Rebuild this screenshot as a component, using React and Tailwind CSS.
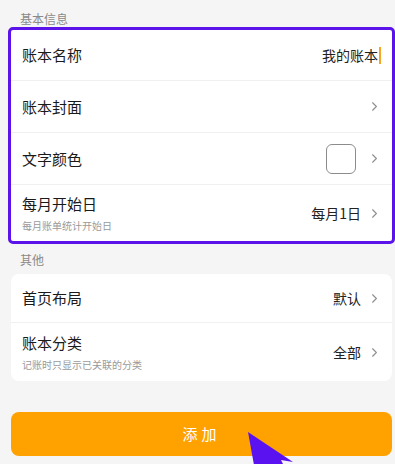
import { ChevronRight } from 'lucide-react'

const FONT = { fontFamily: '"Noto Sans CJK SC", "Noto Sans", sans-serif' }

function Chevron() {
  return <ChevronRight className="w-[15px] h-[15px] text-[#8f8f8f] ml-[6px]" strokeWidth={1.8} />
}

function Row({ title, sub, right, height, divider = true, chevron = true }) {
  return (
    <div className={`flex items-center pl-[11px] pr-[10px] ${height} ${divider ? 'border-b border-[#f0f0f0]' : ''}`}>
      <div className="flex-1 min-w-0 flex flex-col">
        <span className="text-[15px] leading-[20px] text-[#1a1a1a]">{title}</span>
        {sub && <span className="text-[10px] leading-[14px] text-[#9a9a9a] mt-[5px]">{sub}</span>}
      </div>
      {right}
      {chevron && <Chevron />}
    </div>
  )
}

export default function App() {
  return (
    <div className="relative h-[464px] w-[395px] overflow-hidden bg-[#f5f5f5] pl-[11px] pr-[3px]" style={FONT}>
      <div className="pt-[10px] pl-[9px] pb-[3px] text-[12px] leading-[17px] text-[#8a8a8a]">基本信息</div>

      {/* basic info card, highlighted */}
      <div className="bg-white rounded-[2px] outline-[3px] outline-solid outline-[#5b13ea]">
        <Row
          title="账本名称"
          height="h-[51px]"
          chevron={false}
          right={
            <span className="flex items-center text-[14px] text-[#222] mr-[1px]">
              我的账本
              <span className="inline-block w-[2px] h-[17px] bg-[#f5a623] ml-[1px]" />
            </span>
          }
        />
        <Row title="账本封面" height="h-[52px]" />
        <Row
          title="文字颜色"
          height="h-[52px]"
          right={<span className="w-[30px] h-[30px] rounded-[6px] border border-[#8c8c8c] mr-[5px]" />}
        />
        <Row
          title="每月开始日"
          sub="每月账单统计开始日"
          height="h-[56px]"
          divider={false}
          right={<span className="text-[14px] text-[#222]">每月1日</span>}
        />
      </div>

      <div className="pt-[10px] pl-[9px] pb-[6px] text-[12px] leading-[17px] text-[#8a8a8a]">其他</div>

      <div className="bg-white rounded-[8px]">
        <Row
          title="首页布局"
          height="h-[49px]"
          right={<span className="text-[14px] text-[#222]">默认</span>}
        />
        <Row
          title="账本分类"
          sub="记账时只显示已关联的分类"
          height="h-[58px]"
          divider={false}
          right={<span className="text-[14px] text-[#222]">全部</span>}
        />
      </div>

      <button className="mt-[31px] w-full h-[44px] rounded-[8px] bg-[#ffa200] text-white text-[15px] tracking-[4px] flex items-center justify-center">
        添加
      </button>

      {/* pointer cursor overlay */}
      <svg className="absolute left-[248px] top-[432px]" width="60" height="40" viewBox="0 0 60 40">
        <polygon points="0,0 45,30 33,28 40,42 28,46 21,34 8,44" fill="#5a12f0" />
      </svg>
    </div>
  )
}
